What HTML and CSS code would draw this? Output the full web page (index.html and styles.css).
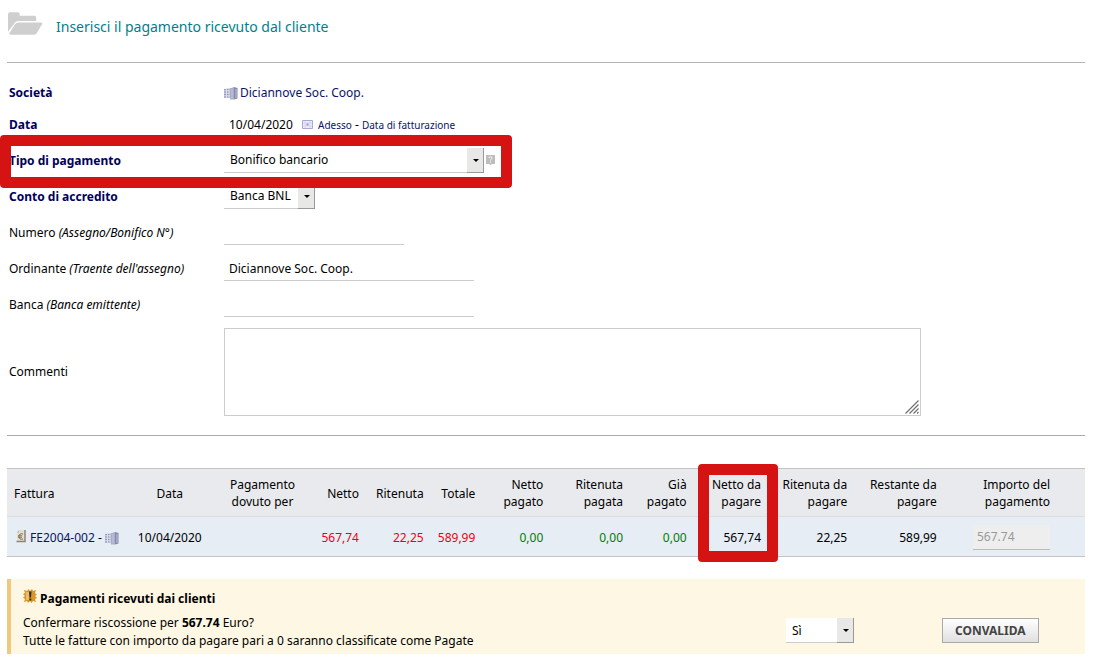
FILE: index.html
```html
<!DOCTYPE html>
<html lang="it">
<head>
<meta charset="utf-8">
<meta name="viewport" content="width=device-width, initial-scale=1">
<title>Inserisci il pagamento ricevuto dal cliente</title>
<link rel="stylesheet" href="styles.css">
</head>
<body>
<svg class="sprite" aria-hidden="true">
  <symbol id="company" viewBox="0 0 14 14">
    <path d="M0 3l7-1v10H0z" fill="#c6c9de"/>
    <path d="M0 3.500h7M0 6h7M0 8.500h7M0 11h7" stroke="#8c90b4" stroke-width=".8"/>
    <path d="M2.500 3v9M5 2.500V12" stroke="#e8eaf4" stroke-width=".8"/>
    <path d="M6 2.500l4-1.500v12.500H6z" fill="#a9adc8"/>
    <path d="M10 1l3.500 1v10.500l-3.500 1z" fill="#868aab"/>
    <path d="M8 3v9.500M12 3v9" stroke="#c8cbe0" stroke-width=".9"/>
  </symbol>
</svg>
<header class="title">
  <svg class="title-icon" viewBox="0 0 36 24" aria-hidden="true">
    <path d="M0 20V2q0-2 2-2h8q2 0 2 2v1.500h15q2 0 2 2V9H11q-3 0-4.500 2.500z" fill="#cfcfcf"/>
    <path d="M11 10.500h23q2 0 1 1.800l-5.500 9.200q-1 1.500-2.500 1.500H3q-2.500 0-1.300-2L7 12.500q1.500-2 4-2z" fill="#cfcfcf"/>
  </svg>
  <h1>Inserisci il pagamento ricevuto dal cliente</h1>
</header>
<form>
  <div class="fields">
    <div class="row row-text">
      <span class="label required">Società</span>
      <div class="value"><a class="company" href="#"><svg class="icon" aria-hidden="true"><use href="#company"/></svg>Diciannove Soc. Coop.</a></div>
    </div>
    <div class="row row-text">
      <label class="label required" for="data">Data</label>
      <div class="value">
        <input class="control date" id="data" type="text" value="10/04/2020">
        <svg class="calendar" viewBox="0 0 11 9" aria-hidden="true">
          <path d="M.5.500h10v8H.5z" fill="#eef" stroke="#a5a8d8"/>
          <path d="M3 1v7M8 1v7M1 3h9M1 6h9" stroke="#d5d6e8"/>
          <path d="M4.500 3.500h2v2h-2z" fill="#a890b8"/>
        </svg>
        <span class="shortcuts"><a href="#">Adesso</a> - <a href="#">Data di fatturazione</a></span>
      </div>
    </div>
    <div class="row highlighted">
      <label class="label required" for="tipo">Tipo di pagamento</label>
      <div class="value">
        <span class="select payment"><select class="control" id="tipo"><option>Bonifico bancario</option></select></span>
        <svg class="help" viewBox="0 0 9 10" aria-hidden="true">
          <path d="M0 0h9v9H6L4.500 10 3 9H0z" fill="#bdbdbd"/>
          <path d="M3 3q0-1.200 1.500-1.200T6 3q0 .8-.8 1.200T4.500 5.500M4.500 6.500v1" fill="none" stroke="#fff"/>
        </svg>
      </div>
      <span class="marker marker-row"></span>
    </div>
    <div class="row">
      <label class="label required" for="conto">Conto di accredito</label>
      <div class="value"><span class="select account"><select class="control" id="conto"><option>Banca BNL</option></select></span></div>
    </div>
    <div class="row">
      <label class="label" for="numero">Numero <em>(Assegno/Bonifico N°)</em></label>
      <div class="value"><input class="control number" id="numero" type="text"></div>
    </div>
    <div class="row">
      <label class="label" for="ordinante">Ordinante <em>(Traente dell'assegno)</em></label>
      <div class="value"><input class="control wide" id="ordinante" type="text" value="Diciannove Soc. Coop."></div>
    </div>
    <div class="row">
      <label class="label" for="banca">Banca <em>(Banca emittente)</em></label>
      <div class="value"><input class="control wide" id="banca" type="text"></div>
    </div>
    <div class="row row-comments">
      <label class="label" for="commenti">Commenti</label>
      <div class="value">
        <div class="comments">
          <textarea id="commenti"></textarea>
          <svg class="grip" viewBox="0 0 14 14" aria-hidden="true"><path d="M.5 13.500l13-13M4.500 13.500l9-9M8.500 13.500l5-5M12 13.500l1.500-1.500" stroke="#707070" stroke-width="1.200"/></svg>
        </div>
      </div>
    </div>
  </div>

  <table class="invoices">
    <thead>
      <tr>
        <th class="c-invoice">Fattura</th>
        <th class="c-date">Data</th>
        <th class="c-due">Pagamento<br>dovuto per</th>
        <th class="c-net">Netto</th>
        <th class="c-tax">Ritenuta</th>
        <th class="c-total">Totale</th>
        <th class="c-net-paid">Netto<br>pagato</th>
        <th class="c-tax-paid">Ritenuta<br>pagata</th>
        <th class="c-paid">Già<br>pagato</th>
        <th class="c-net-due">Netto da<br>pagare<span class="marker marker-cell"></span></th>
        <th class="c-tax-due">Ritenuta da<br>pagare</th>
        <th class="c-rest">Restante da<br>pagare</th>
        <th class="c-amount">Importo del<br>pagamento</th>
      </tr>
    </thead>
    <tbody>
      <tr>
        <td class="c-invoice"><a href="#"><svg class="doc" viewBox="0 0 12 14" aria-hidden="true"><path d="M4 1h6v11H2V3z" fill="#e2ded2"/><path d="M10 1v11.500H1.500" fill="none" stroke="#8a867c" stroke-width="1.500"/><path d="M4 1v2.500H2z" fill="#bcb8ad"/><path d="M8 5Q4 4 4 7.500T8 10M3 6.800h4M3 8.200h4" fill="none" stroke="#85704e"/></svg>FE2004-002</a> - <svg class="icon" aria-hidden="true"><use href="#company"/></svg></td>
        <td class="c-date">10/04/2020</td>
        <td class="c-due"></td>
        <td class="owed">567,74</td>
        <td class="owed">22,25</td>
        <td class="owed">589,99</td>
        <td class="paid">0,00</td>
        <td class="paid">0,00</td>
        <td class="paid">0,00</td>
        <td>567,74</td>
        <td>22,25</td>
        <td>589,99</td>
        <td class="c-amount"><input class="control amount" type="text" value="567.74" aria-label="Importo del pagamento" disabled></td>
      </tr>
    </tbody>
  </table>

  <section class="confirm">
    <div class="message">
      <h2><svg class="burst" viewBox="0 0 14 14" aria-hidden="true"><path d="M1 1l3 1 1.500-2L7 2l2-2 1 2 3-1-1 3 2 1.500L12 7l2 2-2 1 1 3-3-1-1.500 2L7 12l-2 2-1-2-3 1 1-3-2-1.500L2 7 0 5l2-1z" fill="#d9962b"/><path d="M3 3h3v8H3z" fill="#eebd66"/><path d="M6 2.500h2.500L8 8.500H6.500zM6.300 9.500h2v2h-2z" fill="#38301f"/></svg>Pagamenti ricevuti dai clienti</h2>
      <p><label for="conferma">Confermare riscossione per <strong>567.74</strong> Euro?</label></p>
      <p>Tutte le fatture con importo da pagare pari a 0 saranno classificate come Pagate</p>
    </div>
    <div class="choice"><span class="select yesno"><select class="control" id="conferma"><option>Sì</option></select></span></div>
    <div class="submit"><button type="button">CONVALIDA</button></div>
  </section>
</form>
</body>
</html>
```
FILE: styles.css
```css
* { box-sizing: border-box; }
body {
  margin: 0;
  padding: 0 9px 7px 7px;
  background: #fff;
  color: #000;
  font: 12px/18px "Noto Sans", sans-serif;
}
a { color: #0a1464; text-decoration: none; }
.sprite { position: absolute; width: 0; height: 0; }
.icon { width: 14px; height: 14px; margin-right: 2px; vertical-align: -3px; }

.title {
  display: flex;
  align-items: center;
  gap: 13px;
  padding: 11px 0 25px 1px;
  border-bottom: 1px solid #b4b4b4;
}
.title-icon { width: 35px; height: 24px; }
.title h1 { margin: 6px 0 0; color: #007f8c; font-size: 14px; font-weight: 400; line-height: 20px; }

.fields { padding: 13px 0; border-bottom: 1px solid #aaa; }
.row {
  display: grid;
  grid-template-columns: 217px 1fr;
  align-items: center;
  position: relative;
  min-height: 36px;
}
.row-text { min-height: 32px; }
.highlighted { margin-top: 2px; }
.row-comments { min-height: 100px; }
.label, .company { padding-top: 2px; }
.label { padding-left: 2px; }
.row-comments .label { padding-top: 0; }
.required { color: #00005a; font-weight: 700; }
.value { display: flex; align-items: center; }

.control {
  height: 25px;
  margin: 0;
  padding: 1px 5px 0;
  border: 0;
  border-bottom: 1px solid #ccc;
  border-radius: 0;
  background: #fff;
  color: #000;
  font: inherit;
}
.date { width: 75px; }
.number { width: 180px; }
.wide { width: 250px; }
.calendar { width: 11px; height: 9px; margin: 0 5px 0 3px; }
.shortcuts { padding-top: 2px; }
.shortcuts a { font-size: 10px; }
.help { width: 9px; height: 10px; margin-left: 2px; }

.select { display: inline-block; position: relative; }
.select select { width: 100%; padding: 1px 6px 0; appearance: none; }
.select::before {
  content: "";
  position: absolute;
  top: 0;
  right: 0;
  width: 16px;
  height: 24px;
  border-right: 1px solid #999;
  border-bottom: 1px solid #999;
  background: #e8e8e6;
  pointer-events: none;
}
.select::after {
  content: "";
  position: absolute;
  top: 11px;
  right: 5px;
  border: 3px solid transparent;
  border-top-color: #000;
  border-bottom: 0;
  pointer-events: none;
}
.payment { width: 260px; }
.account { width: 91px; }
.yesno { width: 68px; }

.comments { position: relative; width: 81%; }
.comments textarea {
  display: block;
  width: 100%;
  height: 88px;
  border: 1px solid #ccc;
  resize: none;
  font: inherit;
}
.grip { position: absolute; right: 2px; bottom: 2px; width: 14px; height: 14px; }

.marker {
  position: absolute;
  z-index: 2;
  border: 11px solid #d51313;
  border-radius: 4px;
  pointer-events: none;
}
.marker-row { top: -7px; left: -7px; width: 512px; height: 53px; }
.marker-cell { top: -5px; left: 4px; width: 80px; height: 98px; }

.invoices {
  width: 100%;
  margin-top: 32px;
  border-top: 1px solid #c4c4c8;
  border-bottom: 1px solid #c4c4c8;
  border-spacing: 0;
  table-layout: fixed;
  line-height: 17px;
  text-align: right;
  white-space: nowrap;
}
.invoices th { position: relative; padding: 7px 7px 6px; border-bottom: 1px solid #dfdddf; background: #e9eaed; font-weight: 400; }
.invoices td { height: 39px; padding: 1px 7px 0; background: #e6edf5; }
.invoices .c-invoice { width: 11.3%; text-align: left; }
.invoices .c-date { width: 7.6%; text-align: center; }
.invoices .c-due { width: 9.6%; text-align: center; }
.c-net { width: 4.8%; }
.c-tax { width: 6%; }
.c-total { width: 4.8%; }
.c-net-paid { width: 6.3%; }
.c-tax-paid { width: 7.4%; }
.c-paid { width: 5.9%; }
.c-net-due { width: 6.9%; }
.c-tax-due { width: 8%; }
.c-rest { width: 8.3%; }
.invoices .c-amount { padding-right: 35px; }
.owed { color: #f00014; }
.paid { color: #008000; }
.doc { width: 12px; height: 14px; margin: 0 3px 0 1px; vertical-align: -1px; }
.amount { width: 77px; padding: 0 4px; border-color: #bbb; background: #eee; color: #999; }

.confirm {
  display: grid;
  grid-template-columns: 763px 156px 1fr;
  align-items: end;
  margin-top: 22px;
  padding: 10px 0 4px 12px;
  border-left: 4px solid #f0c981;
  background: #fdf7e4;
}
.confirm h2 { margin: 0 0 6px; font-size: 12px; line-height: 18px; }
.confirm p { margin: 0; }
.burst { width: 14px; height: 14px; margin-right: 3px; }
.choice, .submit { display: flex; padding-bottom: 7px; }
.submit button {
  height: 25px;
  padding: 0 12px;
  border: 1px solid #aaa;
  background: linear-gradient(#fff, #e0e0e0);
  color: #444;
  font: 700 12px "Noto Sans", sans-serif;
}
```
